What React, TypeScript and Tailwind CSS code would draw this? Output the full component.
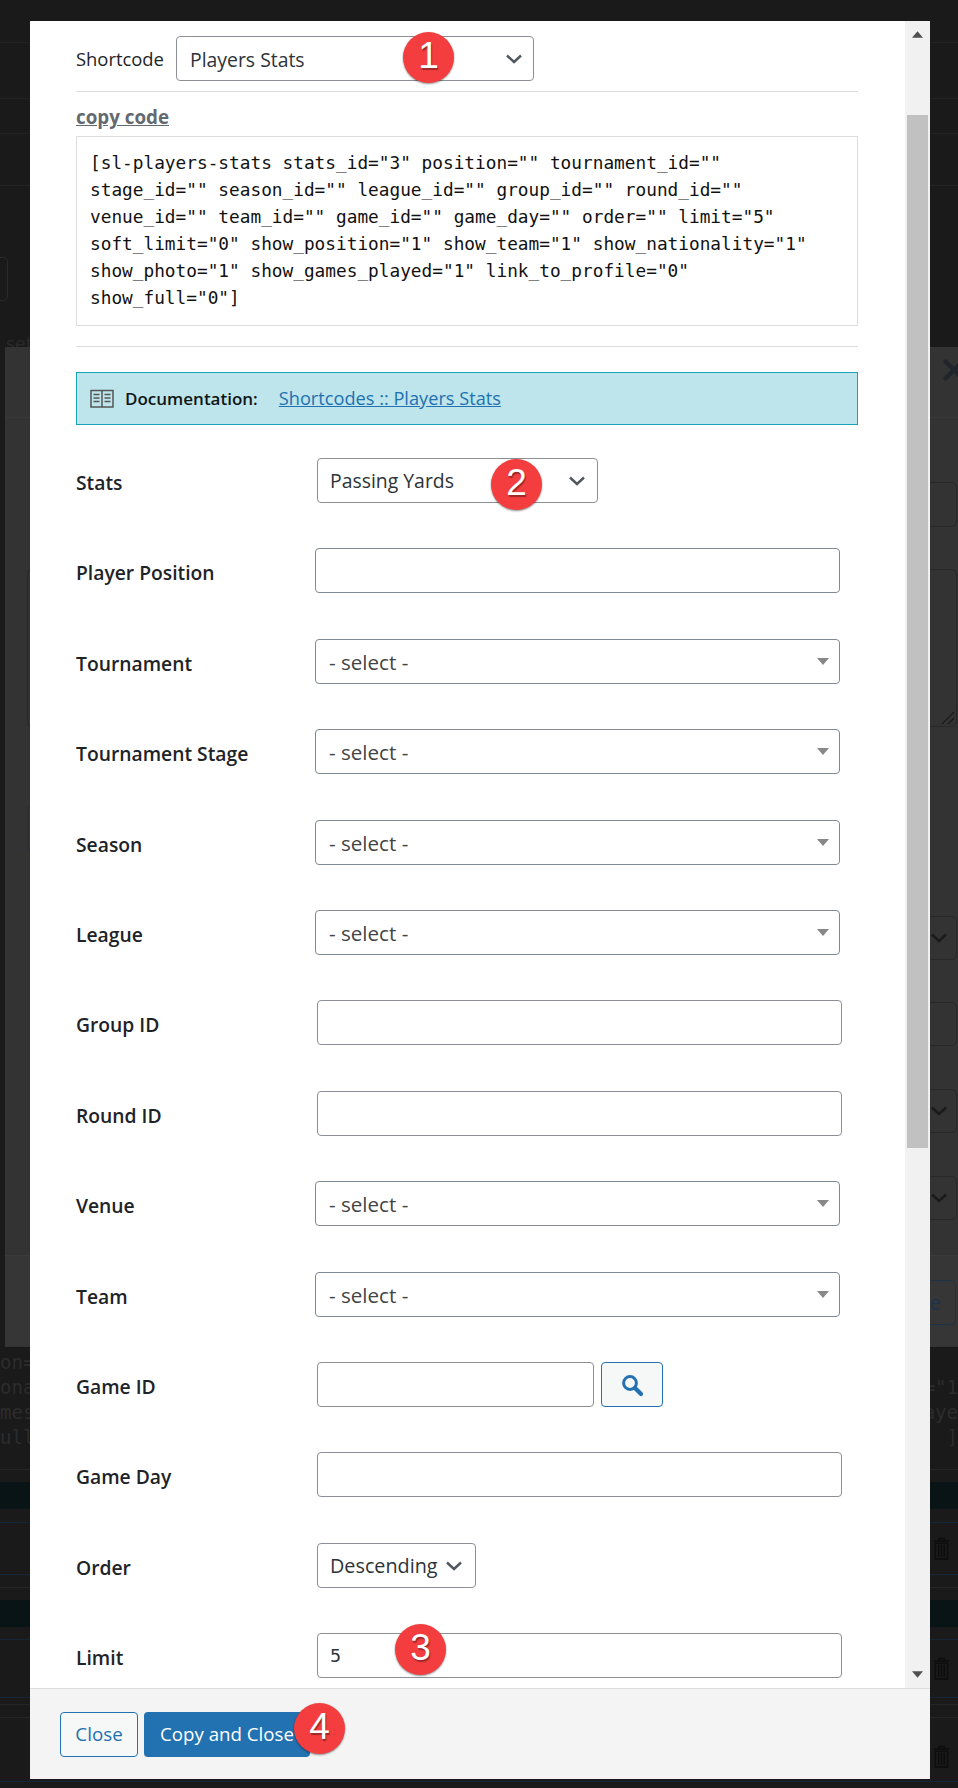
import { X } from "lucide-react"

type RowKind = "native" | "text" | "select" | "input" | "game" | "order" | "limit"

interface Row {
  label: string
  kind: RowKind
  gap: string
  value?: string
}

const rows: Row[] = [
  { label: "Stats", kind: "native", value: "Passing Yards", gap: "mb-[45px]" },
  { label: "Player Position", kind: "text", gap: "mb-[46px]" },
  { label: "Tournament", kind: "select", gap: "mb-[45px]" },
  { label: "Tournament Stage", kind: "select", gap: "mb-[46px]" },
  { label: "Season", kind: "select", gap: "mb-[45px]" },
  { label: "League", kind: "select", gap: "mb-[45px]" },
  { label: "Group ID", kind: "input", gap: "mb-[46px]" },
  { label: "Round ID", kind: "input", gap: "mb-[45px]" },
  { label: "Venue", kind: "select", gap: "mb-[46px]" },
  { label: "Team", kind: "select", gap: "mb-[45px]" },
  { label: "Game ID", kind: "game", gap: "mb-[45px]" },
  { label: "Game Day", kind: "input", gap: "mb-[46px]" },
  { label: "Order", kind: "order", value: "Descending", gap: "mb-[45px]" },
  { label: "Limit", kind: "limit", value: "5", gap: "mb-0" },
]

const codeLines = [
  '[sl-players-stats stats_id="3" position="" tournament_id=""',
  'stage_id="" season_id="" league_id="" group_id="" round_id=""',
  'venue_id="" team_id="" game_id="" game_day="" order="" limit="5"',
  'soft_limit="0" show_position="1" show_team="1" show_nationality="1"',
  'show_photo="1" show_games_played="1" link_to_profile="0"',
  'show_full="0"]',
]

function Chevron({ className }: { className?: string }) {
  return (
    <svg viewBox="0 0 16 10" className={className} fill="none" stroke="currentColor" strokeWidth="2.4">
      <path d="M1 1.5 L8 8 L15 1.5" />
    </svg>
  )
}

function Caret() {
  return (
    <svg viewBox="0 0 12 7" className="w-3 h-[7px] text-[#888888]" fill="currentColor">
      <path d="M0 0 H12 L6 7 Z" />
    </svg>
  )
}

function Badge({ n, className }: { n: number; className: string }) {
  return (
    <div
      className={`absolute flex items-center justify-center w-[51px] h-[51px] pb-[3px] rounded-full bg-[#f33d3f] text-white text-[37px] font-['Liberation_Sans',sans-serif] shadow-[0_1px_2px_rgba(0,0,0,0.45)] [text-shadow:1px_2px_1px_rgba(0,0,0,0.35)] ${className}`}
    >
      {n}
    </div>
  )
}

function Trash() {
  return (
    <svg viewBox="0 0 18 24" className="w-[17px] h-[23px] text-[#0d0d0d]" fill="none" stroke="currentColor" strokeWidth="1.6">
      <path d="M1 4 H17 M6 4 V1.5 H12 V4 M2.5 6.5 H15.5 V23 H2.5 Z M6 8 V21 M9 8 V21 M12 8 V21" />
    </svg>
  )
}

function Control({ row }: { row: Row }) {
  if (row.kind === "native") {
    return (
      <div className="flex items-center justify-between w-[281px] h-[45px] pl-[12px] pr-[12px] border border-[#8c8f94] rounded-[4px] text-[19.4px] text-[#2c3338]">
        <span className="pt-px">{row.value}</span>
        <Chevron className="w-4 h-[10px] text-[#50575e]" />
      </div>
    )
  }
  if (row.kind === "select") {
    return (
      <div className="flex items-center justify-between -ml-[2px] w-[525px] h-[45px] pl-[13px] pr-[10px] border border-[#7e8993] rounded-[4px] text-[20.6px] text-[#444444]">
        <span className="pt-px">- select -</span>
        <Caret />
      </div>
    )
  }
  if (row.kind === "text") {
    return <input readOnly className="block -ml-[2px] w-[525px] h-[45px] border border-[#7e8993] rounded-[4px]" />
  }
  if (row.kind === "game") {
    return (
      <div className="flex gap-[7px]">
        <input readOnly className="block w-[277px] h-[45px] border border-[#8c8f94] rounded-[4px]" />
        <button className="flex items-center justify-center w-[62px] h-[45px] border border-[#2271b1] rounded-[4px] bg-[#f6f7f7]">
          <svg viewBox="0 0 24 24" className="w-[24px] h-[24px] text-[#2271b1]" fill="none" stroke="currentColor">
            <circle cx="10" cy="10" r="6.4" strokeWidth="3" />
            <path d="M15 15 L21 21" strokeWidth="4.2" strokeLinecap="round" />
          </svg>
        </button>
      </div>
    )
  }
  if (row.kind === "order") {
    return (
      <div className="flex items-center justify-between w-[159px] h-[45px] pl-[12px] pr-[13px] border border-[#8c8f94] rounded-[4px] text-[19.8px] text-[#2c3338]">
        <span className="pt-px">{row.value}</span>
        <Chevron className="w-4 h-[10px] text-[#50575e]" />
      </div>
    )
  }
  return (
    <input
      readOnly
      defaultValue={row.value}
      className="block w-[525px] h-[45px] pl-[12px] border border-[#8c8f94] rounded-[4px] text-[#2c3338] font-['DejaVu_Sans',sans-serif] text-[17.5px]"
    />
  )
}

function DimBox({ height, mt, chevron }: { height: string; mt: string; chevron?: boolean }) {
  return (
    <div className={`flex items-center justify-end self-end w-[80px] mr-px pr-[9px] border border-[#282828] rounded-[5px] ${height} ${mt}`}>
      {chevron && <Chevron className="w-4 h-[10px] text-[#1a1a1a]" />}
    </div>
  )
}

function Backdrop() {
  return (
    <div className="font-['Open_Sans',sans-serif] text-[#2a2a2a]">
      <div className="h-[347px] overflow-hidden">
        <div className="h-[43px] border-b border-[#232323]" />
        <div className="h-[56px] border-b border-[#232323]" />
        <div className="h-[35px] border-b border-[#232323]" />
        <div className="h-[52px] border-b border-[#232323]" />
        <div className="mt-[71px] w-[8px] h-[44px] border border-l-0 border-[#2a2a2a] rounded-r-[5px]" />
        <div className="mt-[28px] pl-[6px] text-[19px]">set</div>
      </div>

      <div className="flex flex-col ml-[5px] h-[1000px] bg-[#333333]">
        <div className="flex justify-end h-[71px] pt-[6px] border-b border-[#383838]">
          <X className="w-[34px] h-[34px] -mr-[13px] text-[#20252b]" strokeWidth={3} />
        </div>
        <DimBox height="h-[45px]" mt="mt-[64px]" />
        <div className="flex justify-end items-end self-end w-[80px] h-[158px] mt-[42px] mr-px pr-[1px] pb-[1px] border border-[#282828] rounded-[5px]">
          <svg viewBox="0 0 16 16" className="w-[14px] h-[14px] text-[#161616]" stroke="currentColor" strokeWidth="1.3">
            <path d="M1 15 L15 1 M8 15 L15 8" />
          </svg>
        </div>
        <div className="absolute left-[27px] top-[569px] w-[8px] h-[158px] border border-[#282828] rounded-[5px]" />
        <div className="absolute left-[27px] top-[806px] w-[8px] h-[45px] border border-[#1d3040] rounded-[5px]" />
        <DimBox height="h-[44px]" mt="mt-[189px]" chevron />
        <DimBox height="h-[44px]" mt="mt-[42px]" />
        <DimBox height="h-[44px]" mt="mt-[43px]" chevron />
        <DimBox height="h-[44px]" mt="mt-[43px]" chevron />
        <div className="mt-[35px] flex justify-end h-[91px] pt-[24px] bg-[#363636] border-t border-[#3a3a3a]">
          <div className="flex items-center justify-end w-[60px] h-[45px] mr-[2px] pr-[14px] border border-[#1b3348] rounded-[5px] text-[#1b3348] text-[20px]">
            e
          </div>
        </div>
      </div>

      <div className="text-[19px] leading-[25px] pt-[3px] h-[103px] font-['DejaVu_Sans_Mono',monospace] text-[#2c2c2c]">
        <div className="flex justify-between">
          <span>on="</span>
          <span />
        </div>
        <div className="flex justify-between">
          <span>onal</span>
          <span>="1</span>
        </div>
        <div className="flex justify-between">
          <span>mes_</span>
          <span>aye</span>
        </div>
        <div className="flex justify-between">
          <span>ull="</span>
          <span>]</span>
        </div>
      </div>
      <div className="h-[20px] border-b border-[#252525]" />
      <div className="mt-[12px] h-[27px] bg-[#081415]" />
      <div className="h-[14px] border-b border-[#12283a]" />
      <div className="flex items-center justify-end h-[52px] pr-[8px] border-b border-[#12283a]">
        <Trash />
      </div>
      <div className="h-[13px] border-b border-[#252525]" />
      <div className="mt-[12px] h-[27px] bg-[#081415]" />
      <div className="h-[13px] border-b border-[#12283a]" />
      <div className="flex items-center justify-end h-[58px] pr-[8px] border-b border-[#12283a]">
        <Trash />
      </div>
      <div className="h-[7px] border-b border-[#252525]" />
      <div className="h-[13px] border-b border-[#252525]" />
      <div className="flex items-end justify-end h-[64px] pb-[13px] pr-[8px] border-b border-[#12283a]">
        <Trash />
      </div>
    </div>
  )
}

export default function App() {
  return (
    <div className="relative w-[958px] h-[1788px] overflow-hidden bg-[#1a1a1a]">
      <Backdrop />

      <div className="absolute left-[30px] top-[21px] flex flex-col w-[900px] h-[1758px] bg-white font-['Open_Sans',sans-serif] text-[18.4px] text-[#1d2327]">
        <div className="flex flex-1 min-h-0">
          <div className="w-[875px] pt-[15px] pl-[46px] pr-[47px] overflow-hidden">
            <div className="flex items-center">
              <span className="w-[100px]">Shortcode</span>
              <div className="flex items-center justify-between w-[358px] h-[45px] pl-[13px] pr-[11px] border border-[#8c8f94] rounded-[4px] text-[19.4px] text-[#2c3338]">
                <span className="pt-[2px]">Players Stats</span>
                <Chevron className="w-4 h-[10px] text-[#50575e]" />
              </div>
            </div>
            <div className="mt-[10px] h-px bg-[#dddddd]" />
            <a className="block mt-[12px] h-[32px] leading-[26px] text-[18.8px] font-bold text-[#646970] underline">copy code</a>
            <div className="h-[190px] px-[13px] py-[13px] border border-[#dddddd] font-['DejaVu_Sans_Mono',monospace] text-[17.77px] leading-[27px] text-[#111111] whitespace-pre">
              {codeLines.map((line) => (
                <div key={line}>{line}</div>
              ))}
            </div>
            <div className="mt-[20px] h-px bg-[#dddddd]" />
            <div className="flex items-center mt-[25px] h-[53px] pl-[13px] border border-[#17a2b8] bg-[#bee5eb]">
              <svg viewBox="0 0 24 20" className="w-[24px] h-[20px] text-[#555555]" fill="none" stroke="currentColor" strokeWidth="1.5">
                <path d="M1 1.5 H12 V18 H1 Z M12 1.5 H23 V18 H12 Z M3.5 5.5 H9.5 M3.5 9 H9.5 M3.5 12.5 H9.5 M14.5 5.5 H20.5 M14.5 9 H20.5 M14.5 12.5 H20.5" />
              </svg>
              <span className="ml-[11px] text-[17px] font-semibold text-[#101517]">Documentation:</span>
              <a className="ml-[21px] text-[18.2px] text-[#2271b1] underline">Shortcodes :: Players Stats</a>
            </div>

            <div className="mt-[33px]">
              {rows.map((row) => (
                <div key={row.label} className={`flex items-center h-[45px] ${row.gap}`}>
                  <span className="w-[241px] pt-[6px] text-[19.3px] font-semibold text-[#1d2327]">{row.label}</span>
                  <Control row={row} />
                </div>
              ))}
            </div>
          </div>

          <div className="flex flex-col items-center w-[25px] bg-[#f1f1f1]">
            <svg viewBox="0 0 12 7" className="mt-[10px] w-[11px] h-[7px] text-[#505050]" fill="currentColor">
              <path d="M6 0 L12 7 H0 Z" />
            </svg>
            <div className="mt-[77px] w-[21px] h-[1033px] bg-[#c1c1c1]" />
            <div className="flex-1" />
            <svg viewBox="0 0 12 7" className="mb-[10px] w-[11px] h-[7px] text-[#505050]" fill="currentColor">
              <path d="M0 0 H12 L6 7 Z" />
            </svg>
          </div>
        </div>

        <div className="flex items-start gap-[6px] h-[91px] pt-[23px] pl-[30px] border-t border-[#dddddd] bg-[#f4f4f4]">
          <button className="w-[78px] h-[45px] border border-[#2271b1] rounded-[4px] bg-[#f6f7f7] text-[18.8px] text-[#2271b1]">Close</button>
          <button className="w-[166px] h-[45px] rounded-[4px] bg-[#2271b1] text-[18.7px] text-white">Copy and Close</button>
        </div>
      </div>

      <Badge n={1} className="left-[403px] top-[32px]" />
      <Badge n={2} className="left-[491px] top-[459px]" />
      <Badge n={3} className="left-[395px] top-[1624px]" />
      <Badge n={4} className="left-[294px] top-[1703px]" />
    </div>
  )
}
